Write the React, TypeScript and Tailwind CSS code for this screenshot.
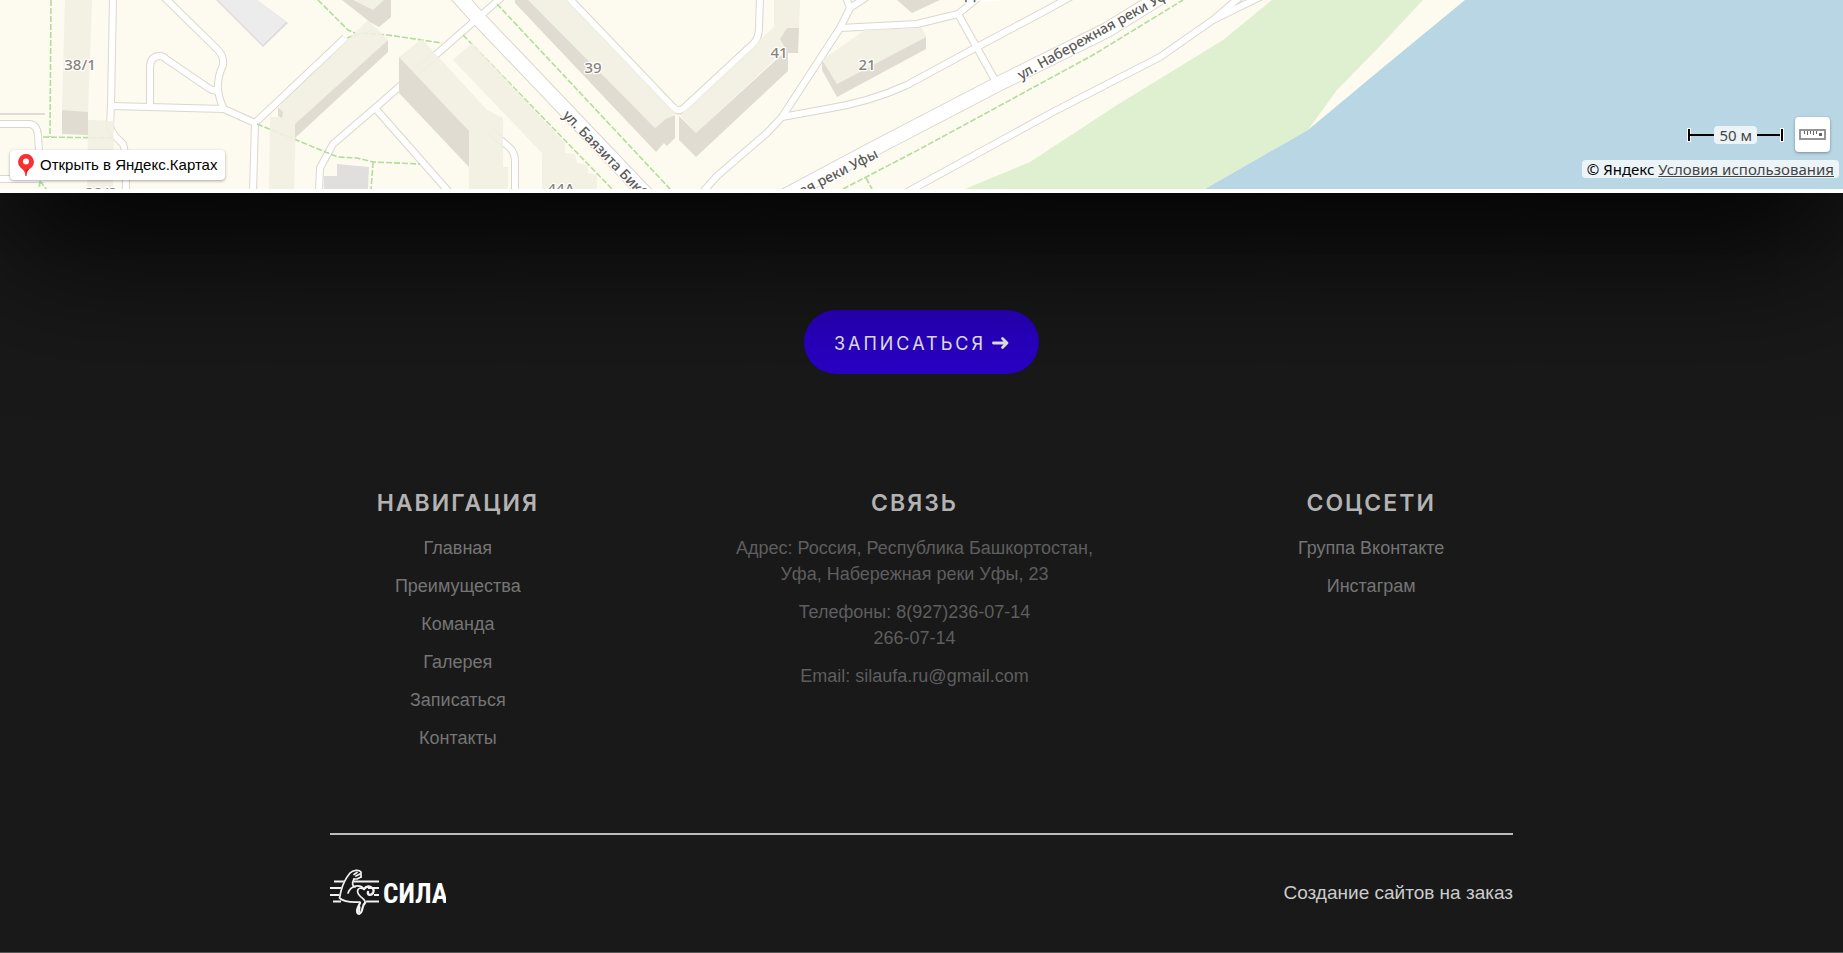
import React from "react";

const roads = [
  "M113 -3 L111 105 L110 126 Q111 133 123 144 Q126 149 126 192",
  "M112 106 L224 109 L255 123",
  "M164 -3 L218 50 Q224 56 223 65 Q217 78 218 90 Q220 102 224 109",
  "M150 107 V68 Q150 56 160 56 Q163 56 166 59 L207 87 Q212 91 218 91",
  "M255 123 L345 38",
  "M255 123 L253 192",
  "M478 18 L375 108 L333 144 L320 168 L319 192",
  "M375 108 L449 192",
  "M-3 124 H30 Q37 125 38 135 L39 152",
  "M-3 179 H44",
  "M478 18 L502 -3",
  "M567 -4 L673 107 Q678 113 684 108 L753 44 Q759 38 759 28 L760 -3",
  "M700 195 L717 176 L767 133 L782 117 L840 28 L850 8 L868 -4",
  "M846 -3 L850 8",
  "M782 117 L826 109 Q870 102 907 85 L977 47 L1043 12 L1072 -4",
  "M840 28 L917 24 L958 14 L979 -3",
  "M958 14 L995 80",
  "M900 196 L920 185 L1053 112 L1160 57 L1213 20 L1240 -3",
  "M1213 20 L1262 -4",
  "M490 131 L509 147 Q515 152 515 162 V192",
];

const avenues = ["M453 -10 L478 18 L642 190 L650 198", "M783 197 L877 147 L1000 83 L1107 30 L1162 -4"];

const paths = [
  "M51 0 L50 137",
  "M43 137 L113 138",
  "M40 181 L39 190 M40 181 L47 190",
  "M318 0 L348 30 L357 34",
  "M347 38 L362 33 L388 35 L442 43",
  "M463 35 L613 190",
  "M497 4 L671 190",
  "M257 124 L338 157 L357 158 L373 162 L420 164",
  "M373 162 L371 190",
  "M843 189 L920 149 L1093 55 L1183 0",
  "M866 178 L872 189",
];

const roofs = [
  "65,0 92,0 88,112 62,110",
  "88,120 114,121 113,190 87,190",
  "342,0 391,0 373,12",
  "368,20 388,40 295,124 295,117 280,117 280,106",
  "270,117 296,117 294,190 269,190",
  "399,57 422,39 487,110 503,118 503,167 508,167 508,190 469,190 469,131",
  "453,60 472,43 565,143 565,153 575,154 577,163 587,165 588,173 597,175 597,190 542,190 542,153",
  "526,0 567,0 676,113 655,128",
  "680,115 696,133 787,48 799,28 800,0 774,0 774,27 754,45",
  "822,60 865,30 922,28 926,37 837,84",
];

const walls = [
  "62,110 88,112 88,135 62,134",
  "342,0 353,0 373,10 384,0 391,0 391,17 379,27 370,22",
  "388,40 388,52 295,138 295,124",
  "278,107 283,112 282,118 278,116",
  "399,57 469,131 469,167 399,93",
  "515,0 528,0 655,128 666,119 675,115 675,138 667,146 664,143 656,152 515,3",
  "679,116 696,133 788,49 788,71 696,157 679,140",
  "787,28 799,28 798,53 788,53 780,39",
  "822,60 837,84 926,37 926,49 837,97 822,70",
  "897,0 912,13 940,0",
  "0,113 45,113 45,115 0,115",
];

const houseNumbers = [
  { x: 80, y: 70, label: "38/1" },
  { x: 101, y: 198, label: "38/2" },
  { x: 593, y: 73, label: "39" },
  { x: 779, y: 58, label: "41" },
  { x: 867, y: 70, label: "21" },
  { x: 561, y: 194, label: "44А" },
];

function MapCanvas() {
  return (
    <svg
      className="block h-[189px] w-full bg-[#fdfaf0]"
      viewBox="0 0 1843 189"
      preserveAspectRatio="xMidYMid slice"
      role="img"
      aria-label="Карта: ул. Набережная реки Уфы"
    >
      <polygon fill="#dff0d0" points="1272,0 1223,40 1117,105 1030,162 965,189 1205,189 1308,130 1337,90 1380,46 1423,0" />
      <polygon fill="#b8d6e4" points="1205,189 1308,130 1380,70 1465,0 1843,0 1843,189" />

      <polygon fill="#dddcda" points="216,0 257,0 288,23 263,47" />
      <polygon fill="#edecec" points="218,0 257,0 286,22 263,45" />
      <polygon fill="#e0dfdd" points="337,164 369,167 368,190 324,190 324,176 337,176" />

      <g fill="none" stroke="#ddd6cd" strokeWidth="8" strokeLinejoin="round">
        {roads.map((d) => (
          <path key={d} d={d} />
        ))}
      </g>
      <g fill="none" stroke="#ddd6cd" strokeWidth="16">
        {avenues.map((d) => (
          <path key={d} d={d} />
        ))}
      </g>
      <g fill="none" stroke="#ffffff" strokeWidth="6" strokeLinejoin="round">
        {roads.map((d) => (
          <path key={d} d={d} />
        ))}
      </g>
      <g fill="none" stroke="#ffffff" strokeWidth="14">
        {avenues.map((d) => (
          <path key={d} d={d} />
        ))}
      </g>

      <g fill="none" stroke="#b3dd9c" strokeWidth="1.6" strokeDasharray="6 2">
        {paths.map((d) => (
          <path key={d} d={d} />
        ))}
      </g>

      <g fill="#f2eee2" fillOpacity="0.9">
        {roofs.map((points) => (
          <polygon key={points} points={points} />
        ))}
      </g>
      <g fill="#e0dcd1">
        {walls.map((points) => (
          <polygon key={points} points={points} />
        ))}
      </g>
      <path d="M567 -4 L673 107 Q678 113 684 108 L753 44 Q759 38 759 28 L760 -3" fill="none" stroke="#fff" strokeWidth="5" />

      <g
        fontFamily="'Noto Sans', sans-serif"
        stroke="#ffffff"
        strokeWidth="2.5"
        strokeLinejoin="round"
        paintOrder="stroke"
        textAnchor="middle"
      >
        <g fontSize="15" fontWeight="500" fill="#87837b">
          {houseNumbers.map((h) => (
            <text key={h.label} x={h.x} y={h.y}>
              {h.label}
            </text>
          ))}
        </g>
        <g fontSize="14" fontWeight="500" fill="#5c5a56">
          <text textAnchor="start" transform="translate(562 116) rotate(46)">
            ул. Баязита Бикбая
          </text>
          <text textAnchor="start" transform="translate(1021 80) rotate(-29)">
            ул. Набережная реки Уфы
          </text>
          <text textAnchor="end" transform="translate(879 157) rotate(-27)">
            ул. Набережная реки Уфы
          </text>
          <text x="983" y="0">
            Дине
          </text>
        </g>
      </g>
    </svg>
  );
}

function PinIcon() {
  return (
    <svg className="h-[22px] w-4 shrink-0" viewBox="0 0 16 22" aria-hidden="true">
      <path d="M8 14 L13 13 C11 15.500 8.800 17 8.300 22 L7.600 22 Z" fill="#c4161c" />
      <path d="M8 0 A8 8 0 0 0 2.200 13.300 C4.500 15.500 7.200 17 7.600 22 L8.300 22 L8.300 16 C10 15.200 12.300 14.800 13.800 13.300 A8 8 0 0 0 8 0 Z" fill="#f8302f" />
      <circle cx="8" cy="7.600" r="3" fill="#fff" />
    </svg>
  );
}

function RulerIcon() {
  return (
    <svg className="h-[11px] w-[27px]" viewBox="0 0 27 11" aria-hidden="true">
      <rect x="1" y="1" width="25" height="9" fill="#fff" stroke="#8a8a8a" strokeWidth="1.800" />
      <path d="M5.500 2 V5 M8.500 2 V6 M11.500 2 V5 M14.500 2 V6 M17.500 2 V5" stroke="#666" strokeWidth="1" />
      <rect x="20" y="4" width="3" height="3" fill="#666" />
    </svg>
  );
}

function Logo() {
  return (
    <svg className="h-12 w-[116px]" viewBox="0 0 116 48" role="img" aria-label="Сила">
      <g stroke="#f2f2f2" strokeWidth="2.200" fill="none">
        <path d="M4 12.500 H15 M24 12.500 H49" />
        <path d="M0 19 H12 M38 19 H49" />
        <path d="M0 26 H10 M44 26 H49" />
        <path d="M3 32.500 H11 M33 32.500 H49" />
      </g>
      <path
        d="M20 4 C23 0.500 29 0.500 31 3 L31 8 L27 10 L24 10 L23 13 C22 17 23 18 25 18 C31 16 36 18 38 23 C37 27 36 29 36 31 C37 35 32 37 32 40 C32 43 31 45 29 45 C25 44 26 38 28 34 C22 35 14 33 9 30 C9 22 13 12 18 6 Z"
        fill="#191919"
      />
      <g fill="none" stroke="#f2f2f2" strokeWidth="1.700" strokeLinecap="round" strokeLinejoin="round">
        <path d="M31 8 L31 3 C29 0.500 23 1 20 4 C16 9 13 14 11 22 L9.500 29 C14 33 23 33.500 30 33" />
        <path d="M24 10 L27 10 L31 8 M24 5.500 L27 3.500 M26 7 L30 5" />
        <path d="M24 10 C22 14 22 17 25 18" />
        <path d="M18 24 C21 16 30 15 34 20" />
        <path d="M34 20 C27 17 26 23 30 27 C33 30 36 31 35 34" />
        <path d="M34 20 C38 15 46 19 43 24 C41 27 37 26 38 23" strokeWidth="2.400" />
        <path d="M35 34 C31 37 34 43 29 45 C25 44 28 38 30 34" strokeWidth="2.200" />
        <path d="M29.500 38 L29 43" strokeWidth="2" />
      </g>
      <text
        x="53"
        y="34"
        fill="#ffffff"
        fontSize="27"
        fontWeight="700"
        fontFamily="'Liberation Sans Narrow', 'Roboto Condensed', 'DejaVu Sans Condensed', sans-serif"
      >
        СИЛА
      </text>
    </svg>
  );
}

const navLinks = ["Главная", "Преимущества", "Команда", "Галерея", "Записаться", "Контакты"];
const socialLinks = ["Группа Вконтакте", "Инстаграм"];

function ColumnTitle({ children }: { children: React.ReactNode }) {
  return (
    <h2 className="font-['Inter',sans-serif] text-[23px] leading-7 font-semibold tracking-[2px] text-[#b3b3b3] uppercase">
      {children}
    </h2>
  );
}

function LinkColumn({ title, links }: { title: string; links: string[] }) {
  return (
    <nav aria-label={title}>
      <ColumnTitle>{title}</ColumnTitle>
      <ul className="mt-[18px] space-y-3">
        {links.map((link) => (
          <li key={link}>
            <a href="#" className="text-[#757575] hover:text-white">
              {link}
            </a>
          </li>
        ))}
      </ul>
    </nav>
  );
}

export default function App() {
  return (
    <div className="min-h-screen border-b border-[#555] bg-[#191919] font-['Liberation_Sans',Arial,sans-serif]">
      <section className="relative z-10">
        <div className="pointer-events-none absolute inset-x-0 -top-60 bottom-0 shadow-[0_50px_150px_#000]" />
        <div className="relative border-b-4 border-white">
          <MapCanvas />
          <a
            href="#"
            className="absolute bottom-[9px] left-2.5 flex h-[30px] items-center gap-1.5 rounded bg-white px-2 text-[15px] text-black shadow-[0_1px_3px_rgba(0,0,0,0.35)]"
          >
            <PinIcon />
            Открыть в Яндекс.Картах
          </a>
          <div className="absolute right-1 bottom-[11px] flex flex-col items-end gap-2 font-['Noto_Sans',sans-serif] text-[15px] text-[#444]">
            <div className="mr-[9px] flex items-center gap-3">
              <div className="flex items-center">
                <span className="h-3 w-0.5 bg-black outline outline-white" />
                <span className="h-0.5 w-6 bg-black" />
                <span className="h-[18px] rounded bg-[#edf4f8] px-[5px] leading-[18px]">50 м</span>
                <span className="h-0.5 w-6 bg-black" />
                <span className="h-3 w-0.5 bg-black outline outline-white" />
              </div>
              <button
                type="button"
                aria-label="Измерение расстояний"
                className="flex size-[35px] items-center justify-center rounded bg-white shadow-[0_1px_3px_rgba(0,0,0,0.35)]"
              >
                <RulerIcon />
              </button>
            </div>
            <div className="h-[18px] rounded bg-[#edf4f8] px-[5px] leading-[18px]">
              <span className="text-black">© Яндекс</span>{" "}
              <a href="#" className="underline">
                Условия использования
              </a>
            </div>
          </div>
        </div>
      </section>

      <div className="flex justify-center pt-[117px]">
        <button
          type="button"
          className="flex h-16 items-center gap-1.5 rounded-full bg-[#2a00c8] px-[30px] pt-0.5 font-['Inter',sans-serif] text-[18px] tracking-[3px] text-[#eeeeee]"
        >
          ЗАПИСАТЬСЯ
          <svg className="h-3.5 w-[17px]" viewBox="0 0 17 14" aria-hidden="true">
            <path
              d="M1.500 7 H15 M10.500 2.500 L15 7 L10.500 11.500"
              fill="none"
              stroke="#eeeeee"
              strokeWidth="2.800"
              strokeLinecap="round"
              strokeLinejoin="round"
            />
          </svg>
        </button>
      </div>

      <footer className="pt-[115px]">
        <div className="mx-auto grid w-[1384px] max-w-full grid-cols-3 pr-3.5 text-center text-[18px] leading-[26px]">
          <LinkColumn title="Навигация" links={navLinks} />
          <section>
            <ColumnTitle>Связь</ColumnTitle>
            <address className="mt-[18px] space-y-3 text-[#5e5e5e] not-italic">
              <p>
                Адрес: Россия, Республика Башкортостан,
                <br />
                Уфа, Набережная реки Уфы, 23
              </p>
              <p>
                Телефоны: 8(927)236-07-14
                <br />
                266-07-14
              </p>
              <p>Email: silaufa.ru@gmail.com</p>
            </address>
          </section>
          <LinkColumn title="Соцсети" links={socialLinks} />
        </div>

        <div className="mx-auto mt-[82px] flex w-[1183px] max-w-full items-center justify-between border-t-2 border-[#bcbcbc] pt-[34px] pb-8">
          <Logo />
          <a href="#" className="text-[19px] text-[#cccccc]">
            Создание сайтов на заказ
          </a>
        </div>
      </footer>
    </div>
  );
}
